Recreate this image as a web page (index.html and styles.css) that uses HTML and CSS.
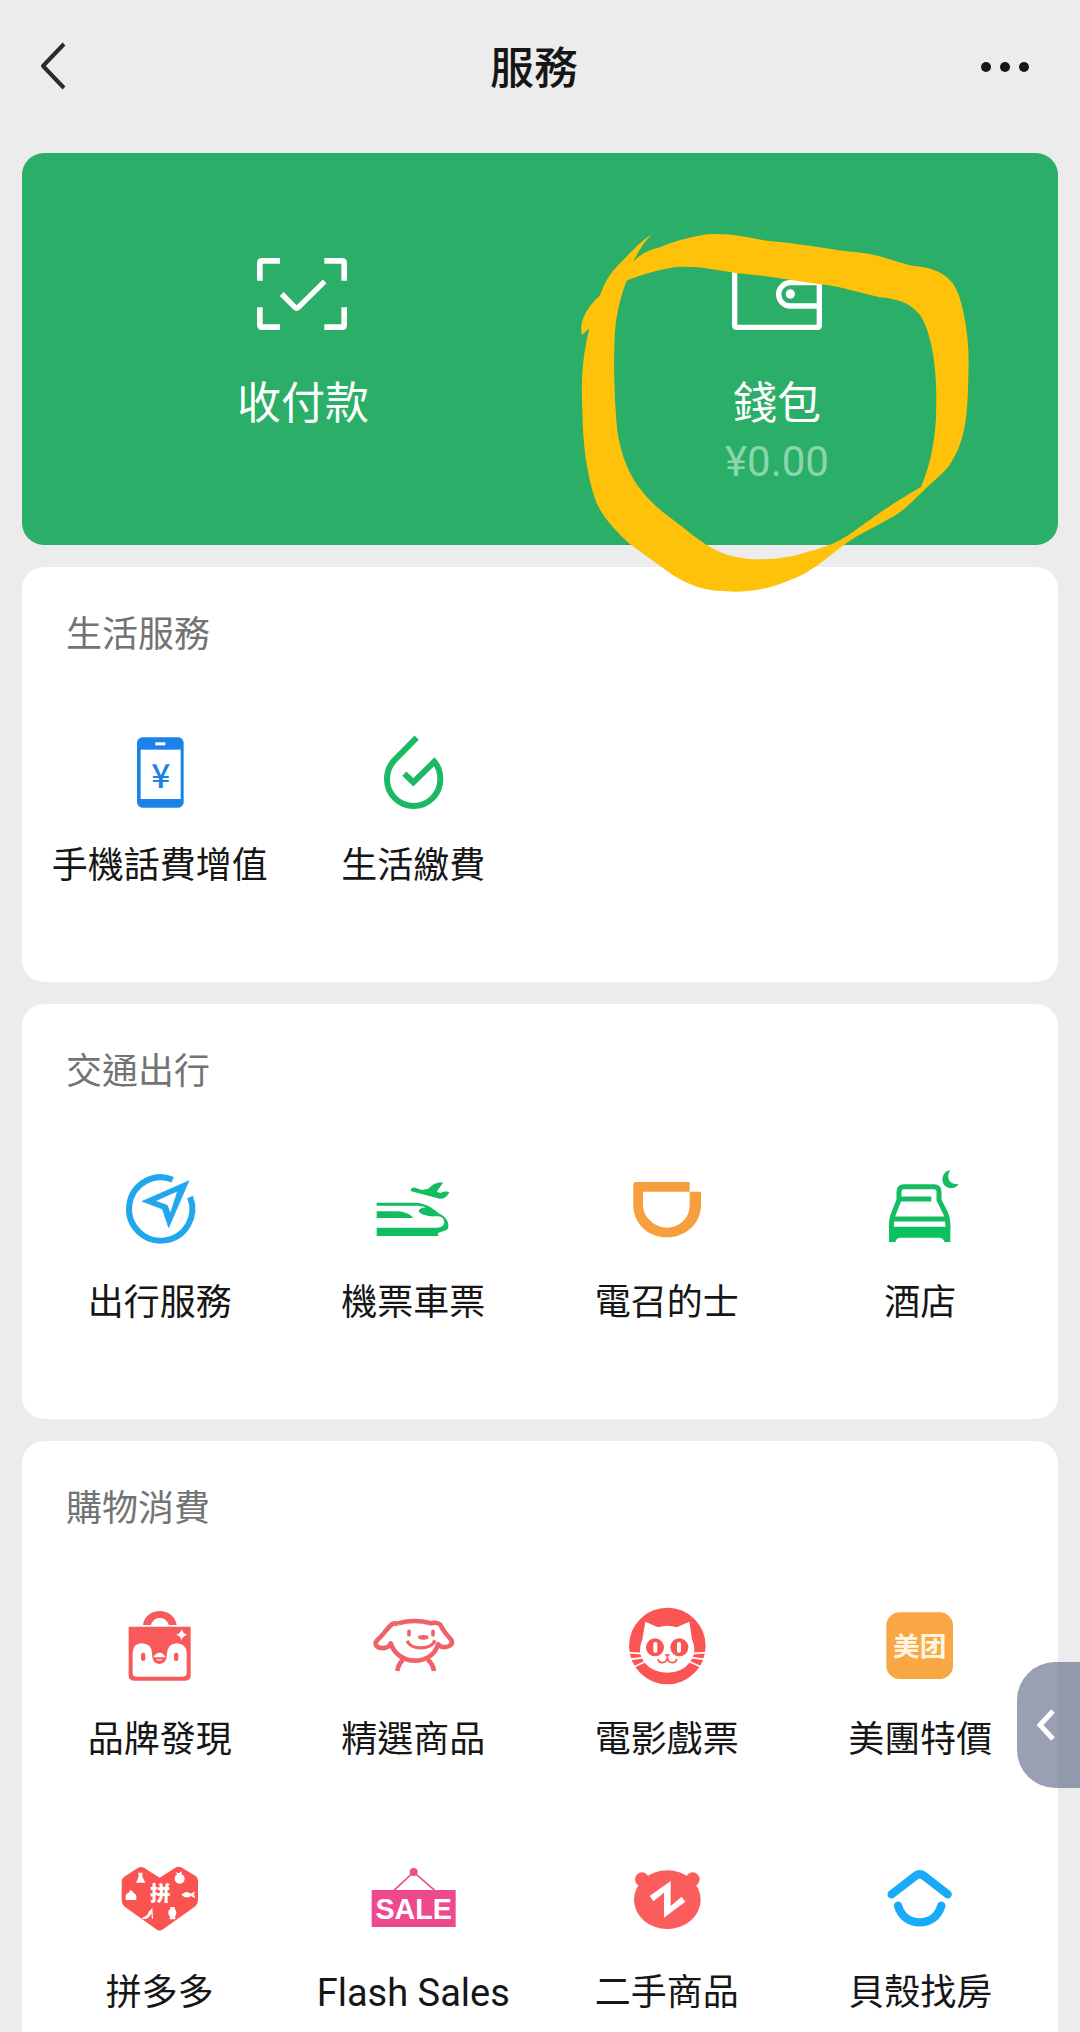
FILE: index.html
```
<!DOCTYPE html>
<html lang="zh-Hant">
<head>
  <meta charset="UTF-8">
  <meta name="viewport" content="width=device-width, initial-scale=1.0">
  <title>服務</title>
  <link rel="stylesheet" href="styles.css">
</head>
<body>
  <div class="page">
    <header class="header">
      <button class="header-button" aria-label="返回">
        <svg width="56" height="56" viewBox="0 0 56 56"><path d="M32 6 L11 28 L32 50" fill="none" stroke="#2b2b2b" stroke-width="4" stroke-linejoin="round"/></svg>
      </button>
      <h1 class="header-title">服務</h1>
      <button class="header-button" aria-label="更多">
        <svg width="56" height="56" viewBox="0 0 56 56" fill="#161616"><circle cx="6" cy="29" r="5"/><circle cx="25" cy="29" r="5"/><circle cx="44" cy="29" r="5"/></svg>
      </button>
    </header>

    <main class="content">
      <section class="hero">
        <a class="hero-item" href="#">
          <svg class="hero-icon" viewBox="165 102 288 240" fill="none" stroke="#fff" stroke-width="17">
            <path d="M179.500 182V129Q179.500 122.500 186 122.500H240M373 122.500H426Q432.500 122.500 432.500 129V182M179.500 262V315Q179.500 321.500 186 321.500H240M373 321.500H426Q432.500 321.500 432.500 315V262"/>
            <path d="M245 222L285 262Q290 267 295 262L374 184" stroke-width="16"/>
          </svg>
          <span class="hero-label">收付款</span>
        </a>
        <a class="hero-item" href="#">
          <svg class="hero-icon" viewBox="507 132 288 240" fill="none" stroke="#fff" stroke-width="16">
            <rect x="524" y="152" width="254" height="200" rx="5"/>
            <path d="M778 218H691A35 35 0 0 0 691 288H778"/>
            <circle cx="691" cy="252" r="14" fill="#fff" stroke="none"/>
          </svg>
          <span class="hero-label">錢包</span>
          <span class="hero-amount">¥0.00</span>
          <!-- hand drawn marker ring around the wallet -->
          <svg class="marker" viewBox="0 0 1320 1200" fill="#ffc20a" fill-rule="evenodd">
            <path d="M273 75C250 98 235 125 218 158C240 130 270 120 300 112C350 90 400 80 440 73C510 68 560 82 620 92C700 98 800 115 860 124C950 128 1000 155 1060 168C1130 172 1180 200 1198 260C1225 350 1228 430 1225 500C1222 600 1222 690 1165 770C1140 800 1120 812 1090 842C1050 880 1030 905 990 925C930 960 890 975 845 1010C790 1050 750 1090 690 1110C620 1140 560 1148 500 1144C420 1142 370 1120 310 1075C270 1045 240 1025 205 998C165 960 135 930 110 880C80 800 68 700 67 600C62 500 70 430 88 355L66 375C55 340 80 290 119 258C135 215 150 190 175 165C205 135 245 90 273 75Z
            M200 212C240 195 300 178 350 171C420 168 470 180 530 190C610 195 700 212 780 223C850 230 910 252 960 262C1020 268 1050 280 1080 315C1110 360 1128 450 1129 550C1129 620 1130 720 1083 831C980 890 930 930 880 965C830 1000 810 1005 740 1027C670 1050 580 1055 510 1037C440 1015 400 975 360 945C290 895 260 865 225 815C185 750 170 680 167 600C160 500 162 400 167 340C175 290 185 250 200 212Z"/>
          </svg>
        </a>
      </section>

      <section class="card">
        <h2 class="card-title">生活服務</h2>
        <div class="grid">
          <a class="item" href="#">
            <svg class="icon" viewBox="287 507 264 264">
              <rect x="350" y="532" width="140" height="211" rx="16" fill="#1b82ea"/>
              <rect x="361" y="569" width="120" height="148" fill="#fff"/>
              <rect x="405" y="547" width="30" height="9" fill="#fff"/>
              <text class="icon-yen" x="421" y="684" text-anchor="middle">¥</text>
            </svg>
            <span class="label">手機話費增值</span>
          </a>
          <a class="item" href="#">
            <svg class="icon" viewBox="1048 507 264 264">
              <path d="M1191 533L1123 602C1108 618 1102 635 1102 658A80 80 0 0 0 1262 658C1262 635 1255 618 1244 605L1181 667L1154 641" fill="none" stroke="#1cb964" stroke-width="18"/>
            </svg>
            <span class="label">生活繳費</span>
          </a>
        </div>
      </section>

      <section class="card">
        <h2 class="card-title">交通出行</h2>
        <div class="grid">
          <a class="item" href="#">
            <svg class="icon" viewBox="227 48 264 264">
              <path d="M397 89A95 95 0 1 0 449 141" fill="none" stroke="#22a7ef" stroke-width="18"/>
              <path d="M446 92L305 154L366 177L385 233ZM412 123L345 153L381 166L390 190Z" fill="#22a7ef" fill-rule="evenodd" stroke="#22a7ef" stroke-width="2" stroke-linejoin="round"/>
            </svg>
            <span class="label">出行服務</span>
          </a>
          <a class="item" href="#">
            <svg class="icon" viewBox="988 48 264 264" fill="#10bd61">
              <path d="M1011 158H1130C1160 160 1185 178 1197 190C1216 198 1228 215 1226 230C1224 246 1210 240 1194 250L1196 258H1011V233H1192C1206 232 1214 226 1214 215C1212 205 1205 198 1190 199C1165 201 1140 192 1137 184C1137 176 1150 172 1162 173C1150 168 1140 167 1125 167H1011Z"/>
              <path d="M1011 184H1075C1100 186 1115 196 1121 204H1011Z"/>
              <path d="M1112 123C1115 114 1120 111 1126 113L1147 120L1166 116C1180 103 1190 96 1210 98L1191 125L1203 129C1212 124 1222 123 1229 127C1222 141 1212 148 1200 146Z"/>
            </svg>
            <span class="label">機票車票</span>
          </a>
          <a class="item" href="#">
            <svg class="icon" viewBox="131 48 264 264">
              <path d="M170 96H331V125H191V165C191 205 230 233 262 233C300 233 331 205 331 165V125H365V165C365 220 320 262 263 262C205 262 162 220 162 165V104Q162 96 170 96Z" fill="#f79f3e"/>
            </svg>
            <span class="label">電召的士</span>
          </a>
          <a class="item" href="#">
            <svg class="icon" viewBox="889 48 264 264" fill="none" stroke="#14bc62" stroke-width="15">
              <path d="M935 235Q935 205 942 190L958 150V125Q958 110 973 110H1063Q1078 110 1078 125V150L1098 190Q1105 205 1105 235M958 147H1055M938 207H1102"/>
              <path d="M928 230H1112V276H1095Q1090 263 1078 263H962Q950 263 947 276H928Z" fill="#0cc160" stroke="none"/>
              <path d="M1112 60C1085 65 1080 100 1103 112C1118 119 1134 110 1136 102C1108 106 1098 80 1112 60Z" fill="#14bc62" stroke="none"/>
            </svg>
            <span class="label">酒店</span>
          </a>
        </div>
      </section>

      <section class="card">
        <h2 class="card-title">購物消費</h2>
        <div class="grid">
          <a class="item" href="#">
            <svg class="icon" viewBox="79 39 264 264" fill="#f8595b">
              <path d="M160 105C163 80 185 63 210 63C235 63 258 80 261 105H238C232 92 224 84 210 84C197 84 189 92 183 105Z"/>
              <path d="M117 110H303V256Q303 272 287 272H133Q117 272 117 256Z"/>
              <path d="M129 188Q130 160 158 160Q187 162 187 190Q187 222 209 222Q232 222 232 190Q234 161 261 160Q290 162 291 188V250Q291 260 280 260H140Q129 260 129 250Z" fill="#fff"/>
              <rect x="154" y="188" width="13" height="25" rx="6"/>
              <rect x="253" y="188" width="13" height="25" rx="6"/>
              <path d="M191 203Q198 189 209 189Q221 189 228 203Q226 220 209 220Q193 220 191 203Z"/>
              <path d="M191 202Q198 188 209 188Q221 188 228 202Z" fill="#fff"/>
              <path d="M198 207H220Q217 213 209 213Q201 213 198 207Z" fill="#fcb4b4"/>
              <path d="M276 117Q279 131 293 134Q279 137 276 151Q273 137 259 134Q273 131 276 117Z" fill="#fff"/>
            </svg>
            <span class="label">品牌發現</span>
          </a>
          <a class="item" href="#">
            <svg class="icon" viewBox="838 39 264 264" fill="none" stroke="#f0626a" stroke-width="14" stroke-linejoin="round">
              <path d="M926 100Q975 86 1024 100Q1042 95 1052 104C1060 122 1072 136 1085 150C1092 163 1076 174 1058 171Q1050 169 1045 163C1036 196 1006 212 976 212C944 212 914 194 903 160C898 172 884 176 868 173C856 168 855 157 864 149C880 136 894 112 908 102Q916 98 926 102"/>
              <path d="M940 209Q926 222 923 243M1014 209Q1030 222 1033 243"/>
              <path d="M953 152C962 180 1024 182 1036 151" stroke-width="10"/>
              <path d="M958 124V134M1030 124V134" stroke-width="11" stroke-linecap="round"/>
              <ellipse cx="1001" cy="142" rx="14" ry="5" fill="#f0626a" stroke-width="4"/>
            </svg>
            <span class="label">精選商品</span>
          </a>
          <a class="item" href="#">
            <svg class="icon" viewBox="98 39 264 264">
              <circle cx="231" cy="168" r="115" fill="#fa5553"/>
              <path d="M165 95L203 112Q231 103 259 112L297 95L305 148Q322 185 300 215Q275 248 231 248Q187 248 160 215Q140 185 156 148Z" fill="#fff"/>
              <g fill="#fa5553"><circle cx="194" cy="172" r="27"/><circle cx="267" cy="172" r="27"/><path d="M222 193H240L231 203Z"/></g>
              <g fill="#fff"><rect x="189" y="156" width="12" height="32" rx="5"/><rect x="260" y="156" width="12" height="32" rx="5"/></g>
              <path d="M203 207Q205 218 216 218Q229 218 231 203Q233 218 246 218Q257 218 259 207" fill="none" stroke="#fa5553" stroke-width="5"/>
              <path d="M115 188L158 191M119 208L158 203M131 230L164 215M347 188L304 191M343 208L304 203M331 230L298 215" stroke="#fff" stroke-width="5"/>
            </svg>
            <span class="label">電影戲票</span>
          </a>
          <a class="item" href="#">
            <svg class="icon" viewBox="859 39 264 264">
              <rect x="890" y="67" width="200" height="200" rx="40" fill="#f9a644"/>
              <text class="icon-meituan" x="990" y="197" text-anchor="middle" lang="zh-Hans">美团</text>
            </svg>
            <span class="label">美團特價</span>
          </a>
          <a class="item" href="#">
            <svg class="icon" viewBox="79 18 264 264">
              <path d="M143 55Q152 48 163 53L210 83L257 53Q267 48 277 53L318 78Q325 83 325 92V150Q325 162 315 170L218 239Q210 244 202 239L105 170Q96 163 96 150V95Q96 85 104 80Z" fill="#fb5350"/>
              <text class="icon-pin" x="212" y="153" text-anchor="middle">拼</text>
              <g fill="#fff">
                <path d="M146 67L152 70L158 67V80L167 98H139L147 80Z"/>
                <circle cx="270" cy="86" r="15"/><path d="M257 66L267 70L277 64L274 75H264Z"/>
                <path d="M108 150V136Q112 129 117 128Q123 114 131 128Q138 130 140 138V150Z"/>
                <path d="M275 134Q290 119 303 131L316 124L313 134L317 145L303 138Q290 149 275 134Z"/>
                <path d="M158 203Q172 200 179 183L188 174L190 206H187L185 190Q178 206 168 207H158Z"/>
                <circle cx="248" cy="188" r="12"/><path d="M242 171H255L257 208H240Z"/>
              </g>
            </svg>
            <span class="label">拼多多</span>
          </a>
          <a class="item" href="#">
            <svg class="icon" viewBox="838 18 264 264">
              <path d="M913 121L972 66L1035 121" fill="none" stroke="#e9508f" stroke-width="5"/>
              <circle cx="972" cy="66" r="12" fill="#e9508f"/>
              <rect x="846" y="120" width="252" height="111" fill="#ed4a8e"/>
              <text class="icon-sale" x="972" y="207" text-anchor="middle">SALE</text>
            </svg>
            <span class="label label-latin">Flash Sales</span>
          </a>
          <a class="item" href="#">
            <svg class="icon" viewBox="98 18 264 264" fill="#fb5c5c">
              <ellipse cx="231" cy="149" rx="100" ry="88"/>
              <circle cx="155" cy="88" r="21"/><circle cx="307" cy="88" r="21"/>
              <path d="M178 138L241 93V168L274 140L285 155L221 203V128L189 154Z" fill="#fff"/>
            </svg>
            <span class="label">二手商品</span>
          </a>
          <a class="item" href="#">
            <svg class="icon" viewBox="859 18 264 264" fill="none" stroke="#19aaf8" stroke-width="25" stroke-linecap="round">
              <path d="M906 133L978 77Q990 68 1002 77L1074 133M925 167C935 200 960 217 990 217C1020 217 1045 200 1055 167"/>
            </svg>
            <span class="label">貝殼找房</span>
          </a>
        </div>
      </section>
    </main>
  </div>

  <button class="side-tab" aria-label="展開">
    <svg width="24" height="36" viewBox="0 0 24 36"><path d="M18 4L5 18L18 32" fill="none" stroke="#fff" stroke-width="5"/></svg>
  </button>
</body>
</html>
```
FILE: styles.css
```
* {
  box-sizing: border-box;
  margin: 0;
  padding: 0;
}

body {
  font-family: Roboto, "Noto Sans CJK TC", sans-serif;
  background-color: #ececec;
  color: #161616;
}

a {
  color: inherit;
  text-decoration: none;
}

button {
  background: none;
  border: none;
  cursor: pointer;
}

svg {
  display: block;
}

.page {
  height: 100vh;
  overflow-y: auto;
  scrollbar-width: none;
}

/* header */
.header {
  display: flex;
  align-items: center;
  justify-content: space-between;
  height: 131px;
  padding: 0 44px 0 32px;
}

.header-button {
  width: 56px;
  height: 56px;
}

.header-title {
  padding-top: 6px;
  font-size: 44px;
  line-height: 60px;
  font-weight: 500;
}

.content {
  display: flex;
  flex-direction: column;
  gap: 22px;
  padding: 22px;
}

/* green panel */
.hero {
  display: grid;
  grid-template-columns: 1fr 1fr;
  padding: 101px 44px 55px;
  border-radius: 22px;
  background-color: #2bae67;
  color: #fff;
}

.hero-item {
  position: relative;
  display: flex;
  flex-direction: column;
  align-items: center;
}

.hero-icon {
  width: 96px;
  height: 80px;
  margin-bottom: 40px;
}

.hero-label {
  font-size: 44px;
  line-height: 60px;
}

.hero-amount {
  font-size: 42px;
  line-height: 56px;
  color: #8ad6ac;
}

.marker {
  position: absolute;
  top: -44px;
  left: 20px;
  width: 440px;
  height: 400px;
  z-index: 1;
  pointer-events: none;
}

/* service cards */
.card {
  padding: 0 11px 22px;
  border-radius: 22px;
  background-color: #fff;
}

.card-title {
  padding: 44px 33px 48px;
  font-size: 36px;
  line-height: 48px;
  font-weight: 400;
  color: #737373;
}

.grid {
  display: grid;
  grid-template-columns: repeat(4, 1fr);
}

.item {
  display: flex;
  flex-direction: column;
  align-items: center;
  padding: 22px 0 70px;
}

.icon {
  width: 88px;
  height: 88px;
  margin-bottom: 25px;
}

.label {
  font-size: 36px;
  line-height: 48px;
  white-space: nowrap;
}

.label-latin {
  font-size: 38px;
}

.icon-yen {
  font: 500 100px "Noto Sans CJK TC", sans-serif;
  fill: #1b82ea;
}

.icon-meituan {
  font: 700 80px "Noto Sans CJK SC", sans-serif;
  fill: #fff6e0;
}

.icon-pin {
  font: 900 62px "Noto Sans CJK TC", sans-serif;
  fill: #fff;
}

.icon-sale {
  font: 700 86px "Liberation Sans", sans-serif;
  fill: #fff;
}

/* floating tab on the right edge */
.side-tab {
  position: fixed;
  right: 0;
  bottom: 244px;
  display: flex;
  align-items: center;
  width: 63px;
  height: 126px;
  padding-left: 18px;
  border-radius: 38px 0 0 38px;
  background-color: rgba(95, 104, 136, 0.63);
}
```
